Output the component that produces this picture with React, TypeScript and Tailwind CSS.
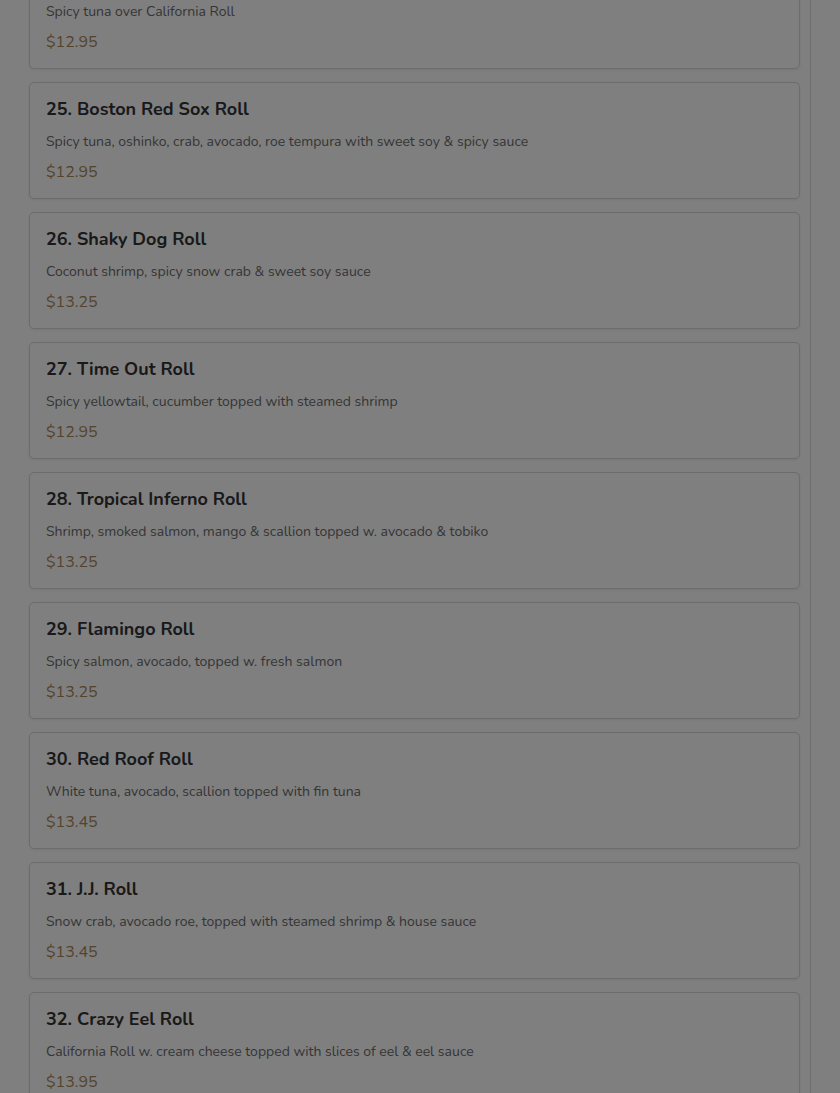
import React from 'react'

interface Roll {
  name: string
  desc: string
  price: string
}

const rolls: Roll[] = [
  { name: '24. Godzilla Roll', desc: 'Spicy tuna over California Roll', price: '$12.95' },
  { name: '25. Boston Red Sox Roll', desc: 'Spicy tuna, oshinko, crab, avocado, roe tempura with sweet soy & spicy sauce', price: '$12.95' },
  { name: '26. Shaky Dog Roll', desc: 'Coconut shrimp, spicy snow crab & sweet soy sauce', price: '$13.25' },
  { name: '27. Time Out Roll', desc: 'Spicy yellowtail, cucumber topped with steamed shrimp', price: '$12.95' },
  { name: '28. Tropical Inferno Roll', desc: 'Shrimp, smoked salmon, mango & scallion topped w. avocado & tobiko', price: '$13.25' },
  { name: '29. Flamingo Roll', desc: 'Spicy salmon, avocado, topped w. fresh salmon', price: '$13.25' },
  { name: '30. Red Roof Roll', desc: 'White tuna, avocado, scallion topped with fin tuna', price: '$13.45' },
  { name: '31. J.J. Roll', desc: 'Snow crab, avocado roe, topped with steamed shrimp & house sauce', price: '$13.45' },
  { name: '32. Crazy Eel Roll', desc: 'California Roll w. cream cheese topped with slices of eel & eel sauce', price: '$13.95' },
]

function RollCard({ roll }: { roll: Roll }) {
  return (
    <div className="border border-[#d9d9d9] rounded-[5px] bg-white px-4 pt-4 pb-4 shadow-[0_1px_3px_rgba(0,0,0,0.08)]">
      <h3 className="text-[18px] leading-[21px] font-bold text-[#333333] mb-[12px]">{roll.name}</h3>
      <p className="text-[14px] leading-[20px] text-[#6b6b6b] mb-[10px]">{roll.desc}</p>
      <div className="text-[16px] leading-[20px] text-[#a8875a]">{roll.price}</div>
    </div>
  )
}

export default function App() {
  return (
    <div
      className="relative h-[1093px] overflow-hidden bg-white flex"
      style={{ fontFamily: 'Nunito, Lato, "Noto Sans", sans-serif' }}
    >
      <main className="w-[810px] shrink-0 pl-[29px] pr-[10px]">
        <div className="-mt-[48px] flex flex-col gap-[13px]">
          {rolls.map(r => (
            <RollCard key={r.name} roll={r} />
          ))}
        </div>
      </main>
      <aside className="flex-1 border-l border-[#dcdcdc]" />
      <div className="absolute inset-0 bg-black/50" />
    </div>
  )
}
